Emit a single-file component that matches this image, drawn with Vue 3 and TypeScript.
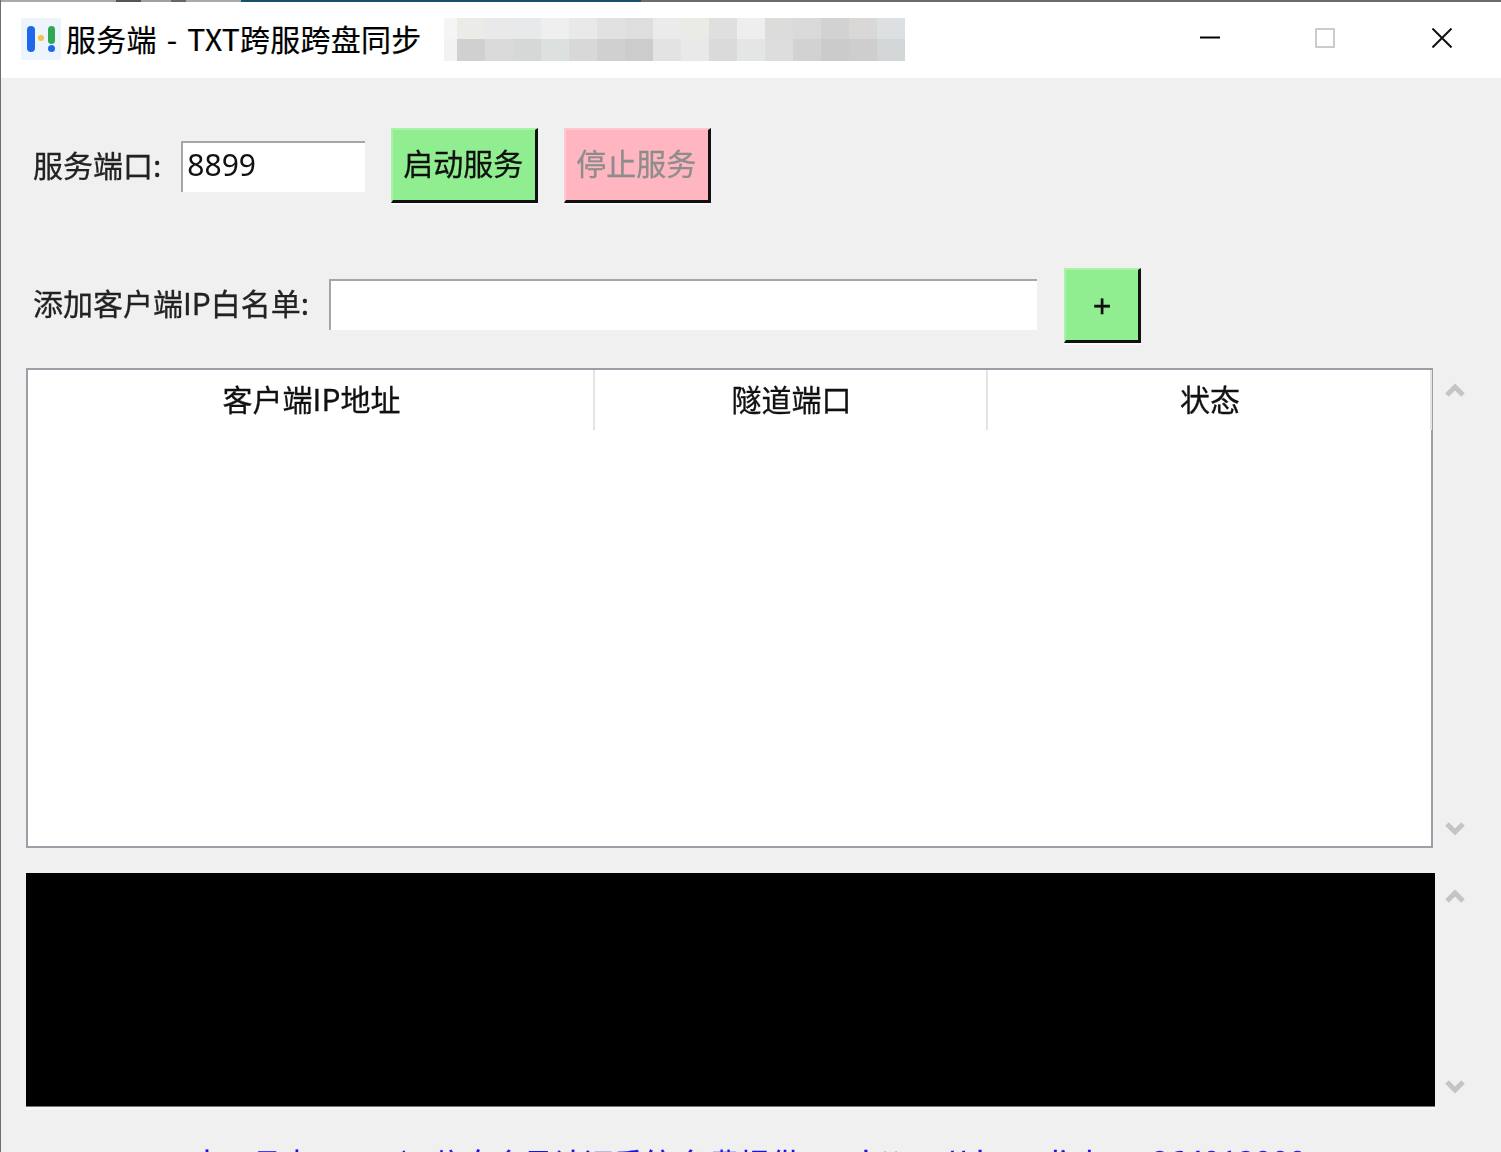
<script setup lang="ts">
const topRow = ['#f5f5f5','#ebebe7','#e9e9e9','#e7eaea','#efefef','#e9e9e9','#e1e1e1','#dedede','#ebebeb','#ebebe6','#dfdfdf','#edeeed','#dcdcda','#dadada','#d2d2d2','#d9d8d6','#dde0e3']
const bottomRow = ['#f2f2f2','#d0d0d0','#dadada','#d6d8d8','#dce0df','#d8d8d8','#d0d0d0','#cccccc','#e3e3e3','#e9e9e9','#dadada','#e3e6e5','#dddddd','#d2d2d2','#cbcbcb','#cdcecd','#d3d6d7']
const cells = [...topRow, ...bottomRow]
const columns = ['客户端IP地址', '隧道端口', '状态']
</script>

<template>
  <div class="window">
    <div class="frame-top"></div>
    <header class="titlebar">
      <svg class="app-icon" viewBox="0 0 40 42" width="40" height="42">
        <rect width="40" height="42" fill="#eef4fb" />
        <rect x="6" y="8" width="8" height="26" rx="4" fill="#1f68ea" />
        <circle cx="20" cy="20" r="3" fill="#f5c242" />
        <rect x="27" y="8" width="7" height="18" rx="3.5" fill="#2fa84f" />
        <circle cx="30.500" cy="30.500" r="3.500" fill="#1f68ea" />
      </svg>
      <span class="title">服务端 - TXT跨服跨盘同步</span>
      <div class="mosaic">
        <i v-for="(c, n) in cells" :key="n" :style="{ background: c }"></i>
      </div>
      <div class="controls">
        <svg viewBox="0 0 20 20" width="20" height="20"><path d="M0 9.500H20" stroke="#000" stroke-width="2" /></svg>
        <svg viewBox="0 0 20 20" width="20" height="20"><rect x="1" y="1" width="18" height="18" fill="none" stroke="#cccccc" stroke-width="2" /></svg>
        <svg viewBox="0 0 20 20" width="20" height="20"><path d="M0.500 0.500L19.500 19.500M19.500 0.500L0.500 19.500" stroke="#111" stroke-width="2" /></svg>
      </div>
    </header>

    <main class="content">
      <section class="row-port">
        <label class="label">服务端口:</label>
        <input class="field port" value="8899" />
        <button class="btn green start">启动服务</button>
        <button class="btn pink stop">停止服务</button>
      </section>

      <section class="row-add">
        <label class="label second">添加客户端IP白名单:</label>
        <input class="field ip" />
        <button class="btn green plus">+</button>
      </section>

      <section class="scroll-row table-row">
        <div class="table">
          <div class="thead">
            <div v-for="c in columns" :key="c" class="th">{{ c }}</div>
          </div>
        </div>
        <div class="scroller">
          <svg viewBox="0 0 20 14" width="20" height="14"><path d="M2 12L10 4L18 12" fill="none" stroke="#c4c4c4" stroke-width="5" /></svg>
          <svg viewBox="0 0 20 14" width="20" height="14"><path d="M2 2L10 10L18 2" fill="none" stroke="#c4c4c4" stroke-width="5" /></svg>
        </div>
      </section>

      <section class="scroll-row console-row">
        <div class="console"></div>
        <div class="scroller">
          <svg viewBox="0 0 20 14" width="20" height="14"><path d="M2 12L10 4L18 12" fill="none" stroke="#c4c4c4" stroke-width="5" /></svg>
          <svg viewBox="0 0 20 14" width="20" height="14"><path d="M2 2L10 10L18 2" fill="none" stroke="#c4c4c4" stroke-width="5" /></svg>
        </div>
      </section>

      <footer class="footer">
        <span>本工具由 - VPN/IP信息会员认证系统 免费提供：</span>
        <span class="url">https://down.link.cn</span>
        <span class="qq">264012000</span>
      </footer>
    </main>
  </div>
</template>

<style>
html, body { margin: 0; background: #f0f0f0; }
</style>

<style scoped>
.window {
  position: relative;
  width: 1501px;
  height: 1152px;
  overflow: hidden;
  box-sizing: border-box;
  border-left: 1px solid #6e6e6e;
  background: #f0f0f0;
  font-family: "Noto Sans CJK SC", "Noto Sans", sans-serif;
  color: #111;
}
.frame-top {
  height: 2px;
  background: linear-gradient(to right, #a9a9a9 0 115px, #555 115px 140px, #a0a0a0 140px 170px, #666 170px 185px, #aaa 185px 240px, #17506f 240px 640px, #6c6c6c 640px);
}
.titlebar {
  display: flex;
  align-items: center;
  height: 76px;
  background: #fff;
  padding-left: 20px;
  box-sizing: border-box;
}
.app-icon { flex: none; margin-top: -2px; }
.title {
  margin-left: 5px;
  font-size: 30px;
  line-height: 40px;
  white-space: nowrap;
  color: #000;
  margin-top: -5px;
  word-spacing: 3px;
  letter-spacing: 0.25px;
  -webkit-text-stroke: 0.2px #000;
}
.mosaic {
  margin-left: 23px;
  margin-top: -2px;
  display: grid;
  grid-template-columns: 13px repeat(16, 28px);
  grid-template-rows: 21px 22px;
  flex: none;
}
.mosaic i { display: block; }
.controls {
  display: flex;
  align-items: center;
  margin-left: auto;
  margin-right: 49px;
  margin-top: -5px;
}
.controls svg:nth-child(2) { margin-left: 95px; }
.controls svg:nth-child(3) { margin-left: 97px; }
.content {
  padding-left: 25px;
  filter: blur(0.55px);
}
.label {
  font-size: 30px;
  line-height: 44px;
  white-space: nowrap;
  color: #222;
  padding-left: 7px;
  flex: none;
  margin-top: -3px;
  -webkit-text-stroke: 0.3px #222;
}
.label.second { margin-top: -7px; }
.field {
  display: block;
  box-sizing: border-box;
  height: 51px;
  background: #fff;
  border: 0;
  border-top: 2px solid #a6a6a6;
  border-left: 2px solid #a6a6a6;
  outline: none;
  font-family: "Noto Sans", sans-serif;
  font-size: 30px;
  color: #111;
  padding: 0 0 5px 4px;
  flex: none;
}
.btn {
  box-sizing: border-box;
  border: 0;
  border-top: 2px solid #a9f3a9;
  border-left: 2px solid #a9f3a9;
  border-right: 3px solid #111;
  border-bottom: 3px solid #111;
  font-family: inherit;
  font-size: 30px;
  padding: 0 2px 6px 0;
  white-space: nowrap;
  flex: none;
  box-shadow: 0 2px 0 #f9f9f9;
  -webkit-text-stroke: 0.3px currentColor;
}
.green { background: #90ee90; color: #111; }
.pink {
  background: #ffb6c1;
  color: #8d8d8d;
  border-top-color: #ffc8d0;
  border-left-color: #ffc8d0;
}
.row-port {
  display: flex;
  align-items: center;
  height: 74px;
  margin-top: 50px;
}
.port { width: 184px; margin-left: 20px; margin-top: 2px; }
.start { width: 147px; height: 75px; margin-left: 26px; }
.stop { width: 147px; height: 75px; margin-left: 26px; }
.row-add {
  display: flex;
  align-items: center;
  height: 74px;
  margin-top: 66px;
}
.ip { width: 708px; margin-left: 20px; margin-top: -2px; }
.plus {
  width: 77px;
  height: 75px;
  margin-left: 27px;
  padding: 4px 0 0;
  font-family: "Liberation Sans", sans-serif;
  font-size: 32px;
}
.scroll-row { display: flex; }
.table-row { margin-top: 26px; height: 480px; }
.table {
  box-sizing: border-box;
  width: 1407px;
  height: 100%;
  background: #fff;
  border: 2px solid #9aa0a6;
}
.thead {
  display: grid;
  grid-template-columns: 567px 393px 444px;
  height: 60px;
}
.th {
  font-size: 30px;
  line-height: 56px;
  text-align: center;
  color: #111;
  border-right: 2px solid #e4e4e4;
  box-sizing: border-box;
  padding-left: 2px;
  -webkit-text-stroke: 0.3px #111;
}
.scroller {
  width: 44px;
  display: flex;
  flex-direction: column;
  align-items: center;
  justify-content: space-between;
  padding: 15px 0 12px;
  box-sizing: border-box;
  flex: none;
}
.console-row { margin-top: 25px; height: 233px; }
.console {
  width: 1409px;
  height: 100%;
  background: #000;
  box-shadow: 0 1px 0 #777, 0 4px 0 #f8f8f8;
}
.console-row .scroller { width: 40px; padding: 16px 0 12px; }
.footer {
  display: flex;
  margin-top: 36px;
  padding-left: 166px;
  font-size: 30px;
  line-height: 40px;
  color: #1c10e6;
  white-space: nowrap;
  -webkit-text-stroke: 0.3px #1c10e6;
}
.url { margin-left: 32px; font-family: "Noto Sans", sans-serif; }
.qq { margin-left: 9px; font-family: "Noto Sans", sans-serif; }
</style>
